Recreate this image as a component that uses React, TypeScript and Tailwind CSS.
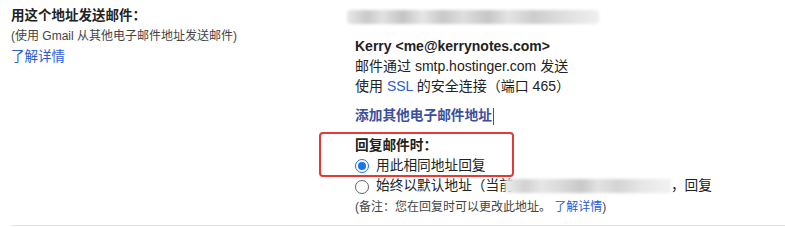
import React from 'react'

const font = { fontFamily: '"Liberation Sans", "Noto Sans CJK SC", sans-serif' }

function Radio({ checked }: { checked?: boolean }) {
  return (
    <span
      className={`inline-flex h-[14px] w-[14px] shrink-0 items-center justify-center rounded-full border ${
        checked ? 'border-[#1a73e8]' : 'border-[#5f6368]'
      } bg-white`}
    >
      {checked && <span className="h-[8px] w-[8px] rounded-full bg-[#1a73e8]" />}
    </span>
  )
}

export default function App() {
  return (
    <div className="h-[227px] w-[785px] overflow-hidden bg-white text-[#222]" style={font}>
      <div className="ml-[11px] flex border-b border-[#e3e3e3] pb-[9px]">
        {/* left label column */}
        <div className="w-[344px] shrink-0 pt-[6px]">
          <div className="text-[13.5px] font-bold leading-[20px]">用这个地址发送邮件：</div>
          <div className="mt-[1px] text-[12px] leading-[18px] text-[#444]">(使用 Gmail 从其他电子邮件地址发送邮件)</div>
          <div className="mt-[2px] text-[13.5px] leading-[20px] text-[#2a5bd7]">了解详情</div>
        </div>

        {/* right content */}
        <div className="relative flex-1 pt-[10px]">
          <div className="-ml-[8px] h-[14px] w-[252px] rounded-[3px] bg-[linear-gradient(90deg,#e8e8e8_0%,#c9c9c9_8%,#e2e2e2_14%,#c4c4c4_22%,#e6e6e6_30%,#c8c8c8_38%,#dedede_46%,#c6c6c6_56%,#e4e4e4_64%,#cdcdcd_74%,#dcdcdc_84%,#efefef_100%)] blur-[1.5px]" />

          <div className="mt-[12px] text-[14px] leading-[20px]">
            <div className="font-bold">Kerry &lt;me@kerrynotes.com&gt;</div>
            <div>邮件通过 smtp.hostinger.com 发送</div>
            <div>
              使用 <span className="text-[#2a5bd7]">SSL</span> 的安全连接（端口 465）
            </div>
          </div>

          <div className="mt-[10px] flex items-center text-[13.7px] font-bold leading-[20px] text-[#3b4f9c]">
            添加其他电子邮件地址
            <span className="ml-[1px] h-[17px] w-[1px] bg-[#3b4f9c]" />
          </div>

          <div className="mt-[10px] text-[13.7px] font-bold leading-[20px]">回复邮件时：</div>
          <div className="flex h-[20px] items-center gap-[7px] text-[13.7px]">
            <Radio checked />
            <span>用此相同地址回复</span>
          </div>
          <div className="flex h-[21px] items-center gap-[7px] text-[13.7px]">
            <Radio />
            <span className="flex items-center">
              始终以默认地址（当前
              <span className="-ml-[8px] h-[14px] w-[166px] bg-[linear-gradient(90deg,#ececec_0%,#d2d2d2_12%,#e6e6e6_22%,#d9d9d9_34%,#c8c8c8_46%,#e2e2e2_56%,#d4d4d4_68%,#e6e6e6_82%,#f2f2f2_100%)] blur-[1.5px]" />
              ，回复
            </span>
          </div>
          <div className="mt-[1px] text-[12px] leading-[18px] text-[#444]">
            (备注：您在回复时可以更改此地址。 <span className="text-[#2a5bd7]">了解详情</span>)
          </div>

          {/* red annotation box */}
          <div className="absolute left-[-36px] top-[132px] h-[45px] w-[195px] rounded-[4px] border-2 border-[#e53935]" />
        </div>
      </div>
    </div>
  )
}
